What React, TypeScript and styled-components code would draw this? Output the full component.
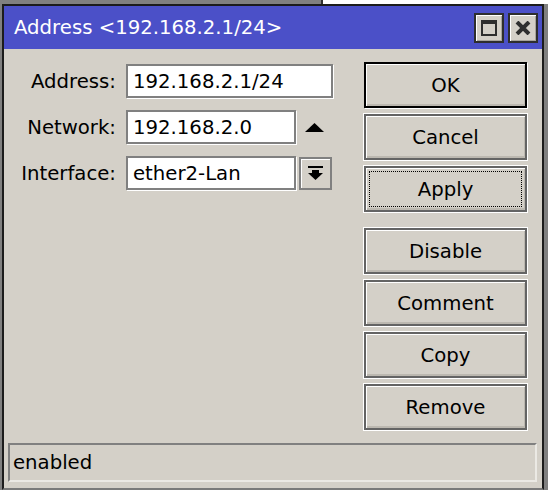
import React from 'react';
import styled, {createGlobalStyle} from 'styled-components';

const GlobalStyle = createGlobalStyle`
  html, body {
    margin: 0;
    padding: 0;
    background: #808080;
  }
  * {
    box-sizing: border-box;
  }
`

const FONT = `"DejaVu Sans", "Liberation Sans", sans-serif`

const Desktop = styled.div`
  width: 548px;
  height: 490px;
  overflow: hidden;
  display: flex;
  flex-direction: column;
  font-family: ${FONT};
  font-size: 19.7px;
  color: #000;
`

const Backdrop = styled.div`
  height: 4px;
  display: flex;
  flex-shrink: 0;
`

const BackdropGray = styled.div`
  width: 323px;
  background: #808080;
  border-right: 2px solid #303030;
`

const BackdropWhite = styled.div`
  flex: 1;
  background: #ffffff;
`

const Window = styled.div`
  margin-left: 2px;
  width: 542px;
  flex: 1;
  display: flex;
  flex-direction: column;
  background: #d4d0c8;
  border: 2px solid #1c1c1c;
  border-bottom-color: #7a7a7a;
`

const TitleBar = styled.div`
  height: 43px;
  flex-shrink: 0;
  display: flex;
  align-items: center;
  padding: 0 4px 0 10px;
  background: #4b50c8;
  color: #fff;
  font-size: 19.7px;
`

const TitleText = styled.span`
  flex: 1;
  padding-bottom: 1px;
`

const TitleButtons = styled.div`
  display: flex;
  gap: 4px;
`

const TitleButton = styled.div`
  width: 30px;
  height: 30px;
  display: flex;
  align-items: center;
  justify-content: center;
  background: #d4d0c8;
  border: 2px solid #2e2e2e;
  box-shadow: inset 1px 1px 0 #ffffff, inset -1px -1px 0 #a8a49c;
`

const Body = styled.div`
  flex: 1;
  display: flex;
  padding-top: 13px;
`

const Form = styled.div`
  width: 360px;
  padding: 2px 0 0 10px;
  display: grid;
  grid-template-columns: 102px 207px;
  column-gap: 10px;
  row-gap: 12px;
  align-content: start;
`

const Label = styled.div`
  height: 34px;
  display: flex;
  align-items: center;
  justify-content: flex-end;
  white-space: nowrap;
`

const FieldRow = styled.div`
  display: flex;
  align-items: center;
  height: 34px;
`

const Input = styled.div<{ $width?: number }>`
  width: ${p => p.$width ? `${p.$width}px` : '100%'};
  height: 34px;
  display: flex;
  align-items: center;
  padding-left: 5px;
  background: #fff;
  border: 2px solid #808080;
  box-shadow: 1px 1px 0 #ffffff;
  white-space: nowrap;
`

const ArrowZone = styled.div`
  flex: 1;
  display: flex;
  justify-content: center;
  align-items: center;
`

const DropButton = styled.div`
  width: 33px;
  height: 33px;
  margin-left: 3px;
  display: flex;
  align-items: center;
  justify-content: center;
  background: #d4d0c8;
  border: 2px solid #808080;
  box-shadow: inset 1px 1px 0 #ffffff;
`

const ButtonColumn = styled.div`
  width: 163px;
  display: flex;
  flex-direction: column;
  gap: 6px;
`

const Spacer = styled.div`
  height: 4px;
`

const Button = styled.div<{ $default?: boolean; $focused?: boolean }>`
  height: 46px;
  display: flex;
  align-items: center;
  justify-content: center;
  position: relative;
  background: #d4d0c8;
  border: 2px solid ${p => p.$default ? '#000' : '#646464'};
  box-shadow: 1px 1px 0 #ffffff, inset 1px 1px 0 #ffffff, inset -1px -2px 0 #bcb8b0;
  ${p => p.$default ? '' : 'outline: 1px solid #fff; outline-offset: 0;'}

  ${p => p.$focused && `
    &::after {
      content: '';
      position: absolute;
      inset: 3px;
      border: 1px dotted #000;
    }
  `}
`

const StatusBar = styled.div`
  height: 39px;
  margin: 0 5px 6px 4px;
  flex-shrink: 0;
  display: flex;
  align-items: center;
  padding-left: 3px;
  border: 2px solid #808080;
  border-right-color: #ebe9e4;
  border-bottom-color: #ebe9e4;
`

const MaxIcon = () => (
  <svg width="16" height="16" viewBox="0 0 16 16">
    <rect x="0" y="0" width="16" height="4" fill="#2e2e2e"/>
    <rect x="1" y="1" width="14" height="14" fill="none" stroke="#2e2e2e" strokeWidth="2"/>
  </svg>
)

const CloseIcon = () => (
  <svg width="16" height="14" viewBox="0 0 16 14">
    <path d="M2 1 L14 13 M14 1 L2 13" stroke="#2e2e2e" strokeWidth="4"/>
  </svg>
)

const UpTriangle = () => (
  <svg width="19" height="9" viewBox="0 0 19 9">
    <polygon points="9.5,0 19,9 0,9" fill="#000"/>
  </svg>
)

const DropIcon = () => (
  <svg width="15" height="15" viewBox="0 0 15 15">
    <rect x="0" y="0" width="15" height="2" fill="#000"/>
    <rect x="4" y="4" width="7" height="3" fill="#000"/>
    <polygon points="0,7 15,7 7.5,14" fill="#000"/>
  </svg>
)

const actions = ['Disable', 'Comment', 'Copy', 'Remove']

export default function App() {
  return (
    <Desktop>
      <GlobalStyle/>
      <Backdrop>
        <BackdropGray/>
        <BackdropWhite/>
      </Backdrop>
      <Window>
        <TitleBar>
          <TitleText>Address &lt;192.168.2.1/24&gt;</TitleText>
          <TitleButtons>
            <TitleButton><MaxIcon/></TitleButton>
            <TitleButton><CloseIcon/></TitleButton>
          </TitleButtons>
        </TitleBar>
        <Body>
          <Form>
            <Label>Address:</Label>
            <FieldRow>
              <Input>192.168.2.1/24</Input>
            </FieldRow>
            <Label>Network:</Label>
            <FieldRow>
              <Input $width={170}>192.168.2.0</Input>
              <ArrowZone><UpTriangle/></ArrowZone>
            </FieldRow>
            <Label>Interface:</Label>
            <FieldRow>
              <Input $width={170}>ether2-Lan</Input>
              <DropButton><DropIcon/></DropButton>
            </FieldRow>
          </Form>
          <ButtonColumn>
            <Button $default>OK</Button>
            <Button>Cancel</Button>
            <Button $focused>Apply</Button>
            <Spacer/>
            {actions.map(a => <Button key={a}>{a}</Button>)}
          </ButtonColumn>
        </Body>
        <StatusBar>enabled</StatusBar>
      </Window>
    </Desktop>
  );
}
